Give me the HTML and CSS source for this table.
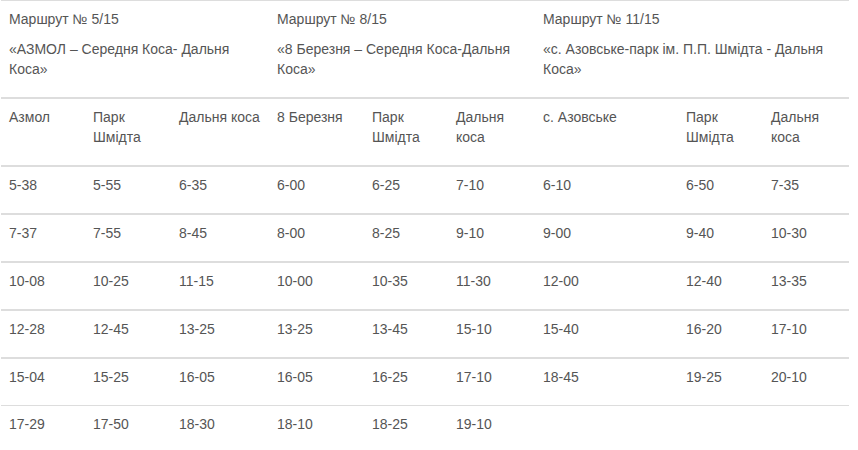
FILE: index.html
```html
<!DOCTYPE html>
<html lang="uk">
<head>
<meta charset="utf-8">
<title>Розклад</title>
<link rel="stylesheet" href="styles.css">
</head>
<body>
<table class="schedule">
  <colgroup>
    <col class="c84"><col class="c86"><col class="c98">
    <col class="c95"><col class="c84"><col class="c87">
    <col class="c143"><col class="c85"><col class="c86">
  </colgroup>
  <tr class="thin">
    <td colspan="3"><p>Маршрут № 5/15</p><p>«АЗМОЛ – Середня Коса- Дальня Коса»</p></td>
    <td colspan="3"><p>Маршрут № 8/15</p><p>«8 Березня – Середня Коса-Дальня Коса»</p></td>
    <td colspan="3"><p>Маршрут № 11/15</p><p>«с. Азовське-парк ім. П.П. Шмідта - Дальня Коса»</p></td>
  </tr>
  <tr>
    <td><p>Азмол</p></td><td><p>Парк Шмідта</p></td><td><p>Дальня коса</p></td>
    <td><p>8 Березня</p></td><td><p>Парк Шмідта</p></td><td><p>Дальня коса</p></td>
    <td><p>с. Азовське</p></td><td><p>Парк Шмідта</p></td><td><p>Дальня коса</p></td>
  </tr>
  <tr>
    <td><p>5-38</p></td><td><p>5-55</p></td><td><p>6-35</p></td>
    <td><p>6-00</p></td><td><p>6-25</p></td><td><p>7-10</p></td>
    <td><p>6-10</p></td><td><p>6-50</p></td><td><p>7-35</p></td>
  </tr>
  <tr>
    <td><p>7-37</p></td><td><p>7-55</p></td><td><p>8-45</p></td>
    <td><p>8-00</p></td><td><p>8-25</p></td><td><p>9-10</p></td>
    <td><p>9-00</p></td><td><p>9-40</p></td><td><p>10-30</p></td>
  </tr>
  <tr>
    <td><p>10-08</p></td><td><p>10-25</p></td><td><p>11-15</p></td>
    <td><p>10-00</p></td><td><p>10-35</p></td><td><p>11-30</p></td>
    <td><p>12-00</p></td><td><p>12-40</p></td><td><p>13-35</p></td>
  </tr>
  <tr>
    <td><p>12-28</p></td><td><p>12-45</p></td><td><p>13-25</p></td>
    <td><p>13-25</p></td><td><p>13-45</p></td><td><p>15-10</p></td>
    <td><p>15-40</p></td><td><p>16-20</p></td><td><p>17-10</p></td>
  </tr>
  <tr>
    <td><p>15-04</p></td><td><p>15-25</p></td><td><p>16-05</p></td>
    <td><p>16-05</p></td><td><p>16-25</p></td><td><p>17-10</p></td>
    <td><p>18-45</p></td><td><p>19-25</p></td><td><p>20-10</p></td>
  </tr>
  <tr class="thin">
    <td><p>17-29</p></td><td><p>17-50</p></td><td><p>18-30</p></td>
    <td><p>18-10</p></td><td><p>18-25</p></td><td><p>19-10</p></td>
    <td></td><td></td><td></td>
  </tr>
</table>
</body>
</html>
```

FILE: styles.css
```css
html, body {
  margin: 0;
  padding: 0;
  background: #fff;
}

body {
  font-family: "Liberation Sans", Arial, sans-serif;
  font-size: 14px;
  line-height: 20px;
  color: #555;
}

.schedule {
  table-layout: fixed;
  width: 848px;
  margin: 0 0 0 1px;
  border-collapse: collapse;
  border-spacing: 0;
}

.c84 { width: 84px; }
.c85 { width: 85px; }
.c86 { width: 86px; }
.c87 { width: 87px; }
.c95 { width: 95px; }
.c98 { width: 98px; }
.c143 { width: 143px; }

.schedule td {
  padding: 8px;
  vertical-align: top;
  text-align: left;
  border-top: 2px solid #ddd;
}

.schedule tr.thin td {
  border-top-width: 1px;
}

.schedule p {
  margin: 0 0 10px;
}
```
